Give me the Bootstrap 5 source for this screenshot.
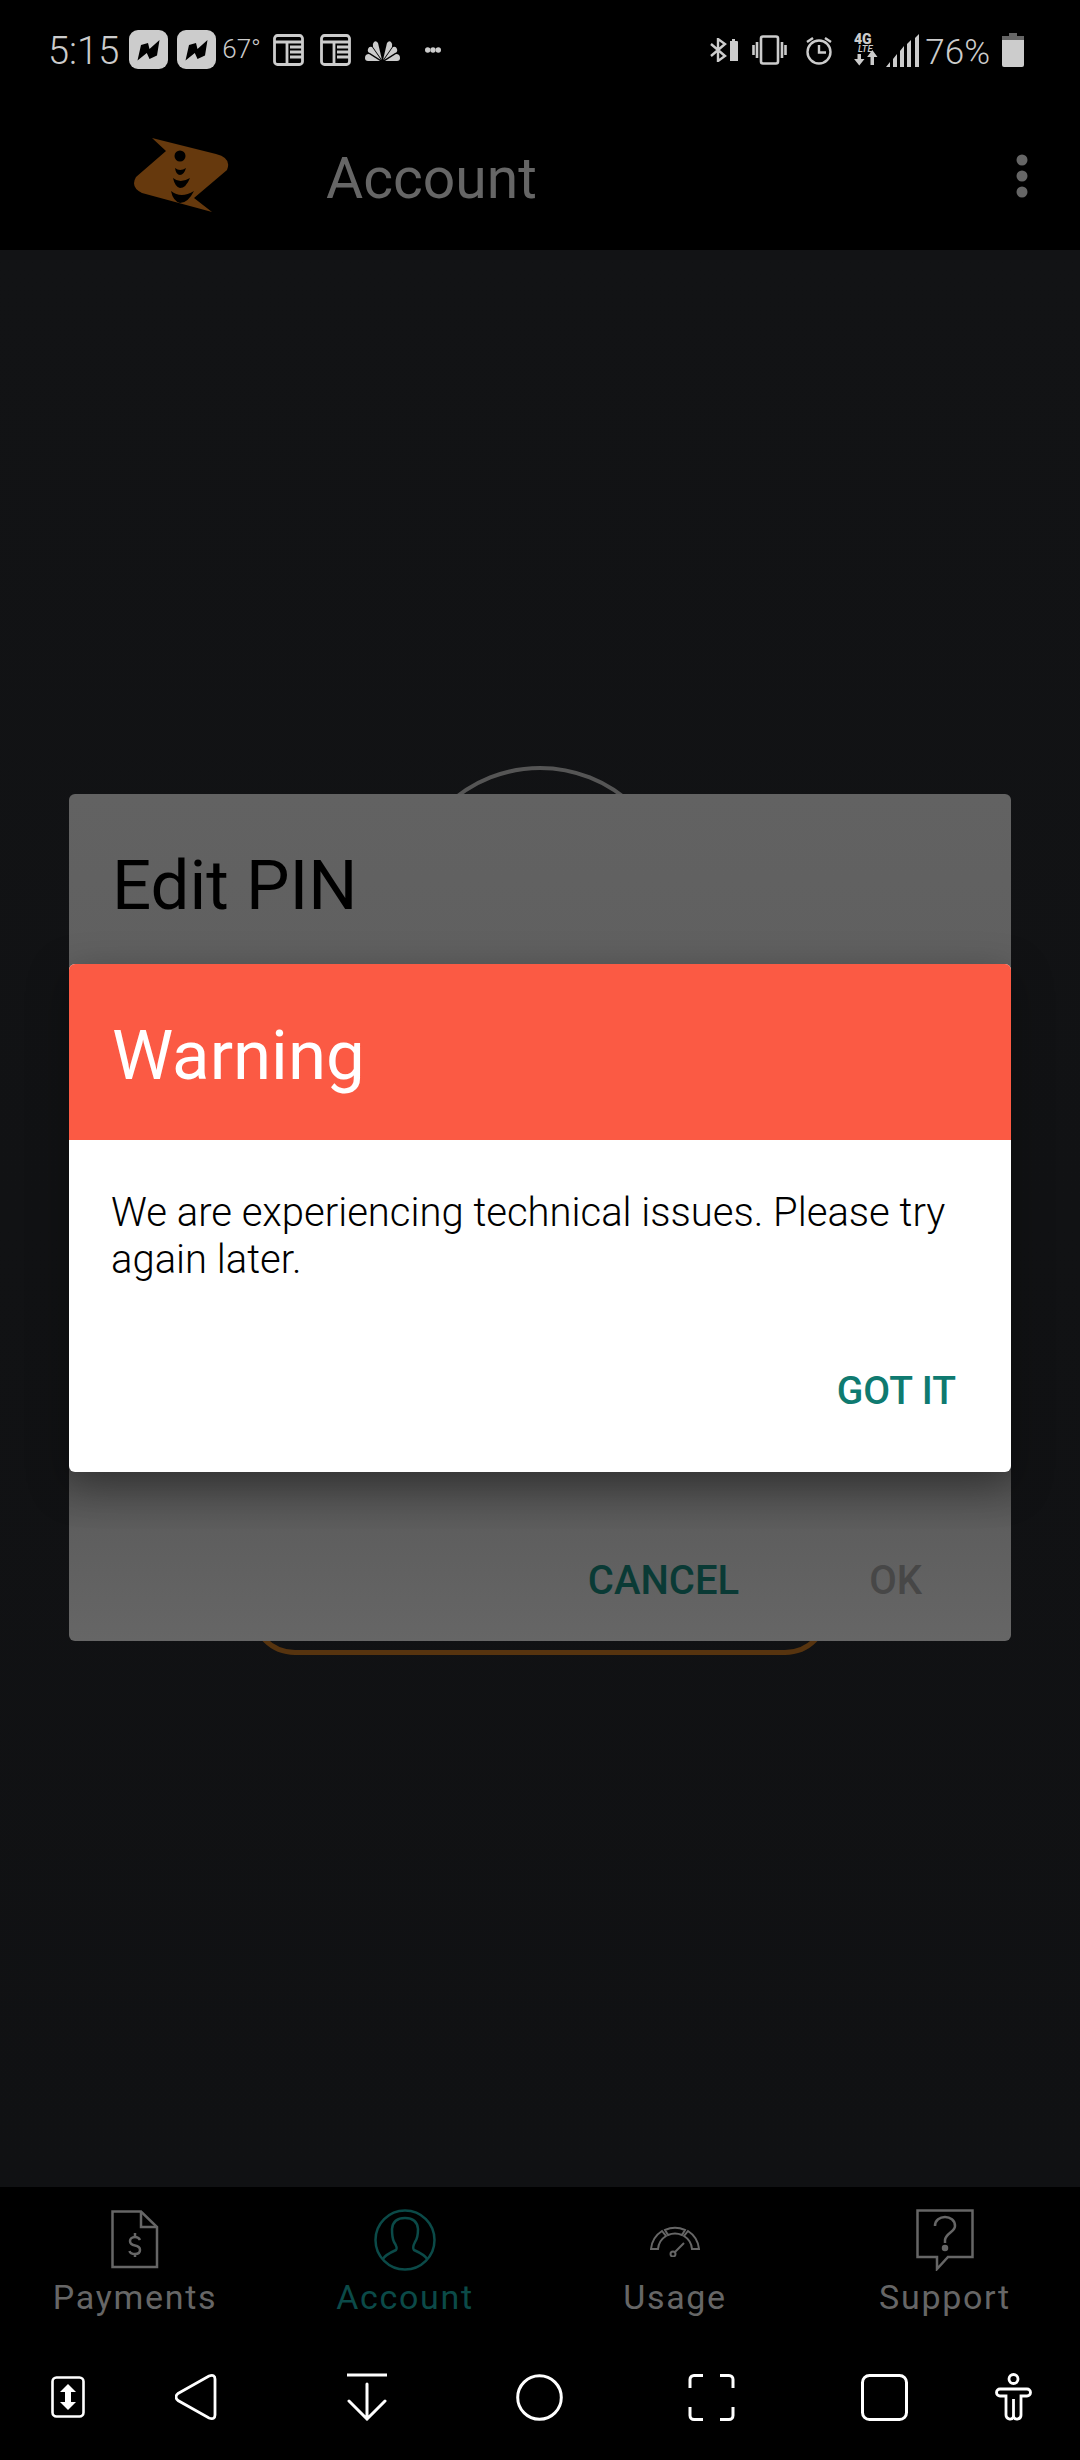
<!DOCTYPE html>
<html lang="en">
<head>
  <meta charset="UTF-8" />
  <title>Account</title>
  <meta name="viewport" content="width=device-width, initial-scale=1" />
  <link href="https://cdn.jsdelivr.net/npm/bootstrap@5.3.0/dist/css/bootstrap.min.css" rel="stylesheet" />

  <style>
    html, body {
      height: 2460px;
      overflow: hidden;
    }

    body {
      background-color: #000;
      font-family: Roboto, "Liberation Sans", sans-serif;
    }

    svg {
      display: block;
      flex: none;
    }

    .phone {
      height: 2460px;
    }

    .top-area {
      height: 250px;
      background-color: #000;
    }

    .status-row {
      height: 100px;
      padding: 0 56px 0 48px;
      color: #ccc;
    }

    .status-time {
      font-size: 38px;
      font-weight: 300;
      line-height: 1;
      margin-top: 2px;
      margin-right: 10px;
    }

    .status-temp {
      font-size: 26px;
      font-weight: 300;
      line-height: 1;
      margin: -2px 0 0 5px;
    }

    .status-pct {
      font-size: 35px;
      font-weight: 300;
      line-height: 1;
      margin: 4px 0 0 5px;
    }

    .icon-4g {
      margin: -6px 0 -6px 21px;
    }

    .app-row {
      height: 150px;
      padding-left: 134px;
      color: #666;
    }

    .app-title {
      font-size: 57px;
      line-height: 1;
      margin-left: 95px;
      margin-top: 6px;
    }

    .app-more {
      position: absolute;
      left: 1016px;
      top: 154px;
    }

    .content-area {
      background: linear-gradient(#121315, #101113);
    }

    .avatar-ring {
      width: 274px;
      height: 274px;
      margin-top: 516px;
      border: 4px solid #555;
      border-radius: 50%;
    }

    .save-outline {
      width: 580px;
      height: 100px;
      margin-top: 515px;
      border: 5px solid #57340f;
      border-radius: 45px;
    }

    .edit-dialog {
      position: absolute;
      left: 69px;
      top: 794px;
      width: 942px;
      height: 847px;
      background: linear-gradient(#626262 0, #606060 20%, #4c4c4c 80%, #5e5e5e 87%, #666 100%);
      border-radius: 6px;
    }

    .edit-title {
      font-size: 69px;
      line-height: 1;
      color: #000;
      padding: 57px 0 0 43px;
    }

    .edit-actions {
      position: absolute;
      right: 89px;
      bottom: 40px;
      font-size: 40px;
      line-height: 1;
      font-weight: 500;
      gap: 130px;
    }

    .cancel-text { color: #0a3a35; }
    .ok-text { color: #474747; }

    .warn-dialog {
      position: absolute;
      left: 69px;
      top: 964px;
      width: 942px;
      height: 508px;
      background-color: #fff;
      border-radius: 6px;
      box-shadow: 0 12px 40px rgba(0, 0, 0, 0.35);
      overflow: hidden;
    }

    .warn-head {
      height: 176px;
      padding: 57px 0 0 43px;
      background-color: #fb5a44;
      color: #fff;
      font-size: 69px;
      line-height: 1;
    }

    .warn-text {
      font-size: 40px;
      font-weight: 300;
      line-height: 47px;
      color: #000;
      padding: 49px 30px 0 42px;
      margin: 0;
    }

    .warn-action {
      font-size: 39px;
      line-height: 1;
      font-weight: 500;
      color: #0f7a70;
      text-align: right;
      padding: 89px 55px 0 0;
    }

    .tab-bar {
      height: 143px;
      padding-top: 22px;
      background-color: #000;
    }

    .tab-item {
      color: #666;
      font-size: 34px;
      line-height: 1;
      letter-spacing: 1.7px;
    }

    .tab-item svg {
      margin-bottom: 9px;
    }

    .tab-active {
      color: #0b4a48;
    }

    .tab-icon-box {
      height: 62px;
    }

    .tab-icon-gap {
      height: 9px;
    }

    .nav-keys {
      height: 130px;
      padding-top: 4px;
      display: grid;
      grid-template-columns: 135px 121px 222px 122px 223px 123px 134px;
      background-color: #000;
    }
  </style>
</head>
<body>
  <div class="phone d-flex flex-column position-relative">
    <div class="top-area flex-shrink-0">
      <div class="status-row d-flex align-items-center justify-content-between">
        <div class="d-flex align-items-center">
          <span class="status-time">5:15</span>
          <svg width="40" height="40" viewBox="0 0 40 40"><rect width="39" height="39" rx="9" fill="#ccc"/><path d="M8.500 30.500L12 15 19 13 20.500 19 30.500 10 28 25.500 20.500 29 17.800 23Z" fill="#000"/></svg>
          <svg class="ms-2" width="40" height="40" viewBox="0 0 40 40"><rect width="39" height="39" rx="9" fill="#ccc"/><path d="M8.500 30.500L12 15 19 13 20.500 19 30.500 10 28 25.500 20.500 29 17.800 23Z" fill="#000"/></svg>
          <span class="status-temp">67°</span>
          <svg width="31" height="32" viewBox="0 0 31 32" style="margin-left:12px" fill="none" stroke="#ccc" stroke-width="2.800"><rect x="1.500" y="1.500" width="28" height="29" rx="3"/><path d="M2 8h27M14 8v22M17 13h12M17 18h12M17 23h12"/></svg>
          <svg class="ms-3" width="31" height="32" viewBox="0 0 31 32" fill="none" stroke="#ccc" stroke-width="2.800"><rect x="1.500" y="1.500" width="28" height="29" rx="3"/><path d="M2 8h27M14 8v22M17 13h12M17 18h12M17 23h12"/></svg>
          <svg width="35" height="21" viewBox="0 0 35 21" style="margin-left:14px" fill="#ccc"><path d="M17 20L13 3Q11 0 9 2 7 4 8 7Z"/><path d="M18 20L22 3Q24 0 26 2 28 4 27 7Z"/><path d="M16 20L7 7Q4 6 3 9 2 12 5 13Z"/><path d="M19 20L28 7Q31 6 32 9 33 12 30 13Z"/><path d="M15 21L4 14Q0 14 0 18 0 21 3 21Z"/><path d="M20 21L31 14Q35 14 35 18 35 21 32 21Z"/></svg>
          <svg width="16" height="6" viewBox="0 0 16 6" fill="#ccc" style="margin-left:25px"><circle cx="2.700" cy="3" r="2.700"/><circle cx="8" cy="3" r="2.700"/><circle cx="13.300" cy="3" r="2.700"/></svg>
        </div>
        <div class="d-flex align-items-center">
          <svg width="29" height="24" viewBox="0 0 29 24"><path d="M1 6L15 18 8 23V1L15 6 1 18" fill="none" stroke="#ccc" stroke-width="2.400"/><path d="M20 3h2V1h3v2h2a1 1 0 0 1 1 1v19h-8z" fill="#ccc"/></svg>
          <svg width="35" height="30" viewBox="0 0 35 30" style="margin-left:13px" fill="none" stroke="#ccc" stroke-width="2.600"><rect x="9" y="1.500" width="17" height="27" rx="2"/><path d="M1.500 10v10M5 7v16M30 7v16M33.500 10v10"/></svg>
          <svg width="28" height="30" viewBox="0 0 28 30" style="margin-left:18px" fill="none" stroke="#ccc" stroke-width="2.400"><circle cx="14" cy="17" r="11.500"/><path d="M14 10v7.500h7M2 7l6-4M26 7l-6-4"/></svg>
          <svg class="icon-4g" width="25" height="44" viewBox="0 -6 25 44" fill="#ccc"><text x="0" y="9.500" font-family="Roboto" font-weight="900" font-size="14">4G</text><text x="4" y="18" font-family="Roboto" font-style="italic" font-weight="500" font-size="9.500">LTE</text><path d="M3.500 20h3.500v5h3.500l-5.200 6.500-5.200-6.500h3.400zM16.500 31h3.500v-8h3.500l-5.200-7-5.200 7h3.400z"/></svg>
          <svg width="34" height="33" viewBox="0 0 34 33" style="margin-left:7px" fill="#ccc"><path d="M0 33L4 28V33ZM7 25L11 20V33H7ZM14 17L18 12V33H14ZM21 10L25 6V33H21ZM29 4L33 0V33H29Z"/></svg>
          <span class="status-pct">76%</span>
          <svg width="22" height="34" viewBox="0 0 22 34" style="margin-left:12px"><rect x="7" y="0" width="8" height="4" fill="#666"/><rect y="3" width="22" height="5" fill="#666"/><path d="M0 7h22v25a2 2 0 0 1-2 2H2a2 2 0 0 1-2-2z" fill="#ccc"/></svg>
        </div>
      </div>
      <div class="app-row d-flex align-items-center">
        <svg width="97" height="76" viewBox="0 0 97 76">
          <path d="M18 1L82 17Q98 21 93 33L60 61 78 75 8 56Q-4 50 2 40L32 14Z" fill="#66390d"/>
          <circle cx="46" cy="19" r="5.500" fill="#000"/>
          <path d="M41 31Q46 35 52 31 50 38 46 38 42 38 41 31ZM39 41Q46 47 56 41 52 51 46 51 41 50 39 41ZM37 54Q47 62 60 54 54 66 46 66 39 64 37 54Z" fill="#000"/>
        </svg>
        <span class="app-title">Account</span>
        <svg class="app-more" width="12" height="44" viewBox="0 0 12 44" fill="#666"><circle cx="6" cy="6" r="5.500"/><circle cx="6" cy="22" r="5.500"/><circle cx="6" cy="38" r="5.500"/></svg>
      </div>
    </div>

    <div class="content-area flex-grow-1 d-flex flex-column align-items-center">
      <div class="avatar-ring"></div>
      <div class="save-outline"></div>
    </div>

    <div class="edit-dialog">
      <div class="edit-title">Edit PIN</div>
      <div class="edit-actions d-flex">
        <span class="cancel-text">CANCEL</span>
        <span class="ok-text">OK</span>
      </div>
    </div>

    <div class="warn-dialog">
      <div class="warn-head">Warning</div>
      <p class="warn-text">We are experiencing technical issues. Please try again later.</p>
      <div class="warn-action">GOT IT</div>
    </div>

    <div class="tab-bar row g-0 flex-shrink-0 text-center">
      <div class="tab-item col-3">
        <svg class="mx-auto" width="48" height="62" viewBox="0 0 48 60" fill="none" stroke="#666" stroke-width="2.500"><path d="M1.500 1.500H30L46 17V57H1.500Z"/><path d="M30 2V17H46"/><path d="M29 30c-1-2-3-3-5-3-3 0-5 2-5 4s2 4 5 4.500 5 2 5 4.500-2 4-5 4-5-1-5.500-3M24 23v3M24 44v3"/></svg>
        Payments
      </div>
      <div class="tab-item tab-active col-3">
        <svg class="mx-auto" width="62" height="62" viewBox="0 0 62 62" fill="none" stroke="#0b4a48" stroke-width="2.500"><circle cx="31" cy="31" r="29.500"/><path d="M9 50Q11 46 22 41 24 39 20 33 18 29 18 20 19 9 31 9 43 9 44 20 44 29 41 33 38 39 40 41 51 46 53 50"/></svg>
        Account
      </div>
      <div class="tab-item col-3">
        <div class="tab-icon-box d-flex align-items-center justify-content-center">
          <svg class="mb-0" width="50" height="33" viewBox="0 0 50 33" fill="none" stroke="#666" stroke-width="2"><path d="M1 25A24 24 0 0 1 12 7L16 12A17 17 0 0 0 8 25ZM15 6A24 24 0 0 1 35 6L32 11A18 18 0 0 0 18 11ZM38 7A24 24 0 0 1 49 25H42A17 17 0 0 0 34 12Z"/><circle cx="23" cy="30" r="2.500"/><path d="M25 28L34 19"/></svg>
        </div>
        <div class="tab-icon-gap"></div>
        Usage
      </div>
      <div class="tab-item col-3">
        <svg class="mx-auto" width="58" height="62" viewBox="0 0 58 62" fill="none" stroke="#666" stroke-width="2.500"><path d="M1.500 1.500H56.500V48H32L21 60V48H1.500Z"/><path d="M19 17c0-6 5-9 10-9s10 3 10 9-9 7-10 14v3"/><circle cx="29" cy="39" r="2" fill="#666"/></svg>
        Support
      </div>
    </div>

    <div class="nav-keys flex-shrink-0">
      <svg class="m-auto" width="34" height="42" viewBox="0 0 34 42"><rect x="1.500" y="1.500" width="31" height="39" rx="4" fill="none" stroke="#fff" stroke-width="2.600"/><path d="M17 8l8 8h-5v10h5l-8 8-8-8h5V16H9z" fill="#fff"/></svg>
      <svg class="m-auto" width="42" height="46" viewBox="0 0 42 46"><path d="M3 19.500L34 2Q40 0 40 5V41Q40 46 34 44L3 26.500Q-1 23 3 19.500Z" fill="none" stroke="#fff" stroke-width="2.800"/></svg>
      <svg class="m-auto" width="42" height="48" viewBox="0 0 42 48" fill="none" stroke="#fff" stroke-width="3" stroke-linecap="round"><path d="M1 2H41" stroke-linecap="butt"/><path d="M21 11V46M3 28L21 46 39 28"/></svg>
      <svg class="m-auto" width="47" height="47" viewBox="0 0 47 47"><circle cx="23.500" cy="23.500" r="21.800" fill="none" stroke="#fff" stroke-width="3"/></svg>
      <svg class="m-auto" width="47" height="47" viewBox="0 0 47 47" fill="none" stroke="#fff" stroke-width="3"><path d="M15 1.500H6a4 4 0 0 0-4 4V14M32 1.500H41a4 4 0 0 1 4 4V14M15 45.500H6a4 4 0 0 1-4-4V33M32 45.500H41a4 4 0 0 0 4-4V33"/></svg>
      <svg class="m-auto" width="47" height="47" viewBox="0 0 47 47"><rect x="1.500" y="1.500" width="44" height="44" rx="7" fill="none" stroke="#fff" stroke-width="3"/></svg>
      <svg class="m-auto" width="39" height="48" viewBox="0 0 39 48" fill="none" stroke="#fff" stroke-width="2.800"><circle cx="19.500" cy="6" r="4.500"/><path d="M6 16H33a3.500 3.500 0 0 1 0 7H27V42a4 4 0 0 1-7.500 2 4 4 0 0 1-7.500-2V23H6a3.500 3.500 0 0 1 0-7Z"/><path d="M19.500 26V44"/></svg>
    </div>
  </div>
</body>
</html>
